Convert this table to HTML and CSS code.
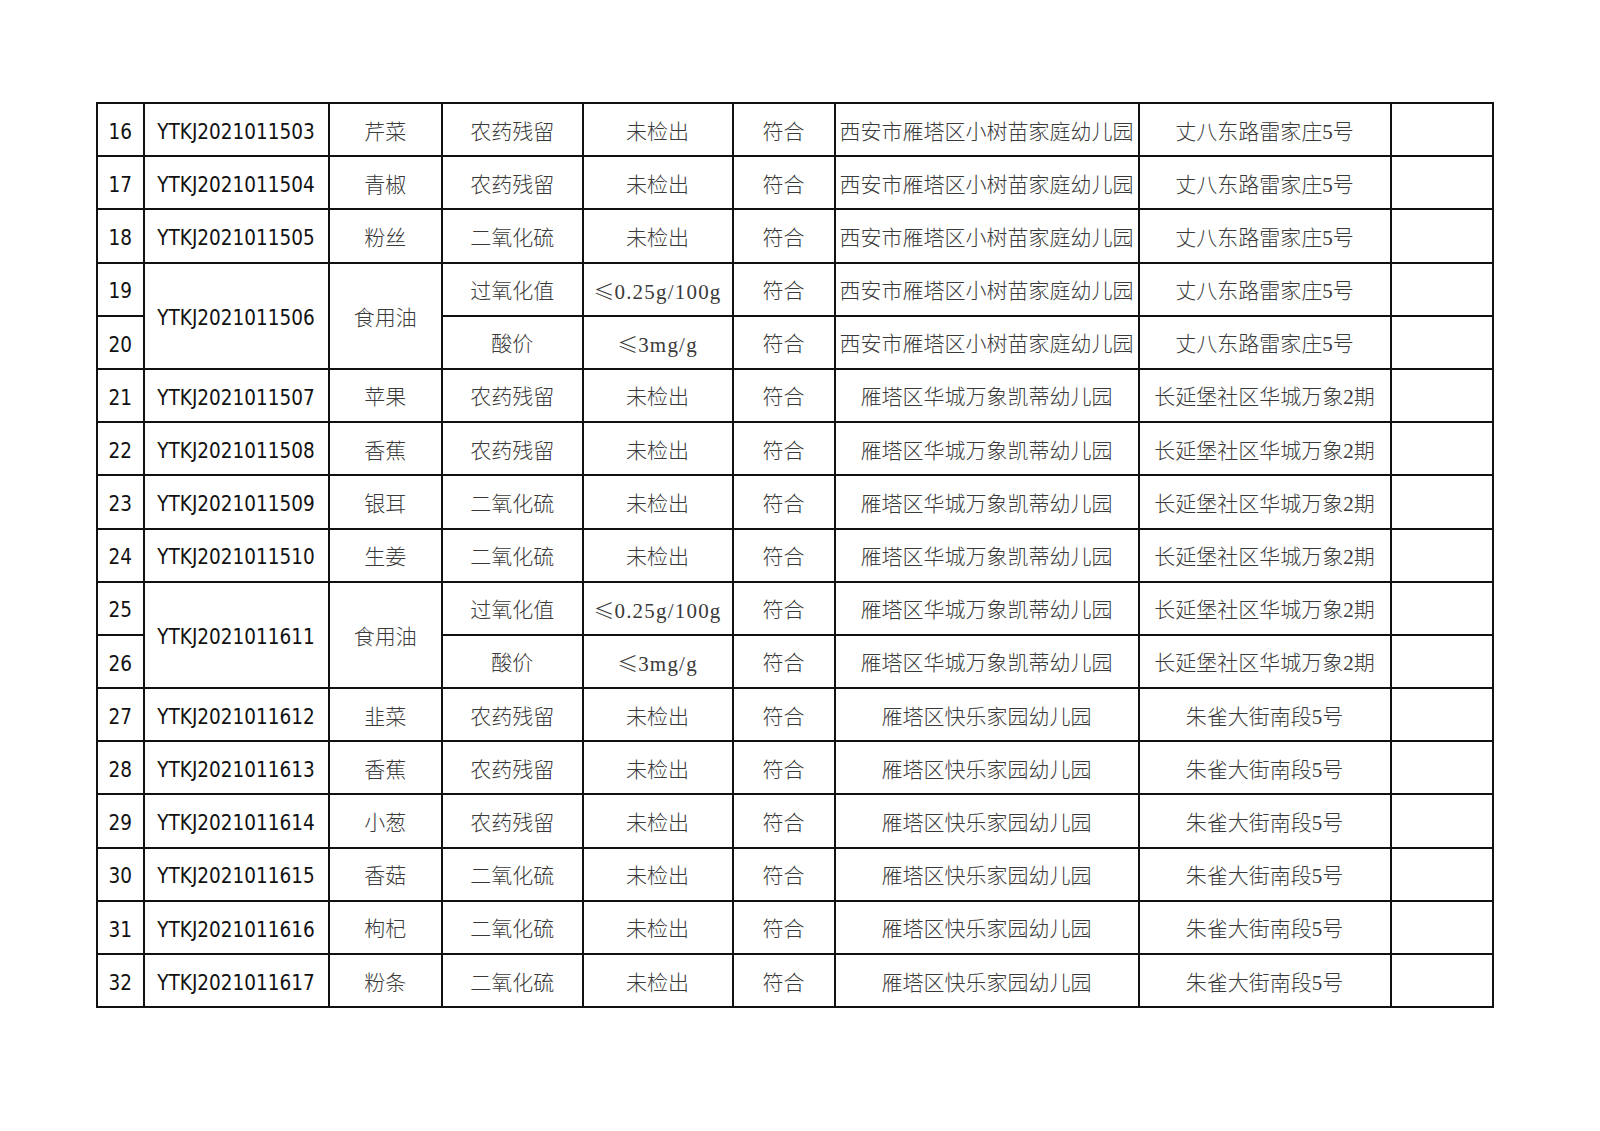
FILE: index.html
```html
<!DOCTYPE html>
<html lang="zh-CN">
<head>
<meta charset="utf-8">
<title>检测结果</title>
<link rel="stylesheet" href="styles.css">
</head>
<body>
<div class="page">
<table class="report">
<colgroup>
<col class="c-no"><col class="c-id"><col class="c-name"><col class="c-item"><col class="c-val"><col class="c-ok"><col class="c-unit"><col class="c-addr"><col class="c-note">
</colgroup>
<tbody>
<tr><td class="num">16</td><td class="num">YTKJ2021011503</td><td>芹菜</td><td>农药残留</td><td>未检出</td><td>符合</td><td>西安市雁塔区小树苗家庭幼儿园</td><td>丈八东路雷家庄5号</td><td></td></tr>
<tr><td class="num">17</td><td class="num">YTKJ2021011504</td><td>青椒</td><td>农药残留</td><td>未检出</td><td>符合</td><td>西安市雁塔区小树苗家庭幼儿园</td><td>丈八东路雷家庄5号</td><td></td></tr>
<tr><td class="num">18</td><td class="num">YTKJ2021011505</td><td>粉丝</td><td>二氧化硫</td><td>未检出</td><td>符合</td><td>西安市雁塔区小树苗家庭幼儿园</td><td>丈八东路雷家庄5号</td><td></td></tr>
<tr><td class="num">19</td><td class="num" rowspan="2">YTKJ2021011506</td><td rowspan="2">食用油</td><td>过氧化值</td><td class="val"><span class="le">≤</span>0.25g/100g</td><td>符合</td><td>西安市雁塔区小树苗家庭幼儿园</td><td>丈八东路雷家庄5号</td><td></td></tr>
<tr><td class="num">20</td><td>酸价</td><td class="val"><span class="le">≤</span>3mg/g</td><td>符合</td><td>西安市雁塔区小树苗家庭幼儿园</td><td>丈八东路雷家庄5号</td><td></td></tr>
<tr><td class="num">21</td><td class="num">YTKJ2021011507</td><td>苹果</td><td>农药残留</td><td>未检出</td><td>符合</td><td>雁塔区华城万象凯蒂幼儿园</td><td>长延堡社区华城万象2期</td><td></td></tr>
<tr><td class="num">22</td><td class="num">YTKJ2021011508</td><td>香蕉</td><td>农药残留</td><td>未检出</td><td>符合</td><td>雁塔区华城万象凯蒂幼儿园</td><td>长延堡社区华城万象2期</td><td></td></tr>
<tr><td class="num">23</td><td class="num">YTKJ2021011509</td><td>银耳</td><td>二氧化硫</td><td>未检出</td><td>符合</td><td>雁塔区华城万象凯蒂幼儿园</td><td>长延堡社区华城万象2期</td><td></td></tr>
<tr><td class="num">24</td><td class="num">YTKJ2021011510</td><td>生姜</td><td>二氧化硫</td><td>未检出</td><td>符合</td><td>雁塔区华城万象凯蒂幼儿园</td><td>长延堡社区华城万象2期</td><td></td></tr>
<tr><td class="num">25</td><td class="num" rowspan="2">YTKJ2021011611</td><td rowspan="2">食用油</td><td>过氧化值</td><td class="val"><span class="le">≤</span>0.25g/100g</td><td>符合</td><td>雁塔区华城万象凯蒂幼儿园</td><td>长延堡社区华城万象2期</td><td></td></tr>
<tr><td class="num">26</td><td>酸价</td><td class="val"><span class="le">≤</span>3mg/g</td><td>符合</td><td>雁塔区华城万象凯蒂幼儿园</td><td>长延堡社区华城万象2期</td><td></td></tr>
<tr><td class="num">27</td><td class="num">YTKJ2021011612</td><td>韭菜</td><td>农药残留</td><td>未检出</td><td>符合</td><td>雁塔区快乐家园幼儿园</td><td>朱雀大街南段5号</td><td></td></tr>
<tr><td class="num">28</td><td class="num">YTKJ2021011613</td><td>香蕉</td><td>农药残留</td><td>未检出</td><td>符合</td><td>雁塔区快乐家园幼儿园</td><td>朱雀大街南段5号</td><td></td></tr>
<tr><td class="num">29</td><td class="num">YTKJ2021011614</td><td>小葱</td><td>农药残留</td><td>未检出</td><td>符合</td><td>雁塔区快乐家园幼儿园</td><td>朱雀大街南段5号</td><td></td></tr>
<tr><td class="num">30</td><td class="num">YTKJ2021011615</td><td>香菇</td><td>二氧化硫</td><td>未检出</td><td>符合</td><td>雁塔区快乐家园幼儿园</td><td>朱雀大街南段5号</td><td></td></tr>
<tr><td class="num">31</td><td class="num">YTKJ2021011616</td><td>枸杞</td><td>二氧化硫</td><td>未检出</td><td>符合</td><td>雁塔区快乐家园幼儿园</td><td>朱雀大街南段5号</td><td></td></tr>
<tr><td class="num">32</td><td class="num">YTKJ2021011617</td><td>粉条</td><td>二氧化硫</td><td>未检出</td><td>符合</td><td>雁塔区快乐家园幼儿园</td><td>朱雀大街南段5号</td><td></td></tr>
</tbody>
</table>
</div>
</body>
</html>
```
FILE: styles.css
```css
html, body {
  margin: 0;
  padding: 0;
  background: #ffffff;
}
.page {
  padding: 102px 0 0 96px;
}
.report {
  border-collapse: collapse;
  table-layout: fixed;
  width: 1396px;
  font-family: "Liberation Serif", "Noto Sans CJK SC", serif;
  font-size: 21px;
  font-weight: 300;
  color: #3a3a3a;
}
.c-no { width: 46.5px; }
.c-id { width: 185px; }
.c-name { width: 113.5px; }
.c-item { width: 140.5px; }
.c-val { width: 150px; }
.c-ok { width: 102px; }
.c-unit { width: 304px; }
.c-addr { width: 252px; }
.c-note { width: 102.5px; }
.report tr {
  height: 53.2px;
}
.report td {
  border: 2px solid #111111;
  padding: 5px 0 0 0;
  text-align: center;
  vertical-align: middle;
  white-space: nowrap;
  overflow: hidden;
  line-height: 1.2;
}
.report td.num {
  font-family: "DejaVu Sans Condensed", "DejaVu Sans", sans-serif;
  font-stretch: condensed;
  font-size: 20.5px;
  font-weight: 400;
  color: #111111;
}
.report td.val {
  letter-spacing: 1.2px;
}
.le {
  font-family: "Noto Sans CJK SC", sans-serif;
  letter-spacing: 0;
}
```
